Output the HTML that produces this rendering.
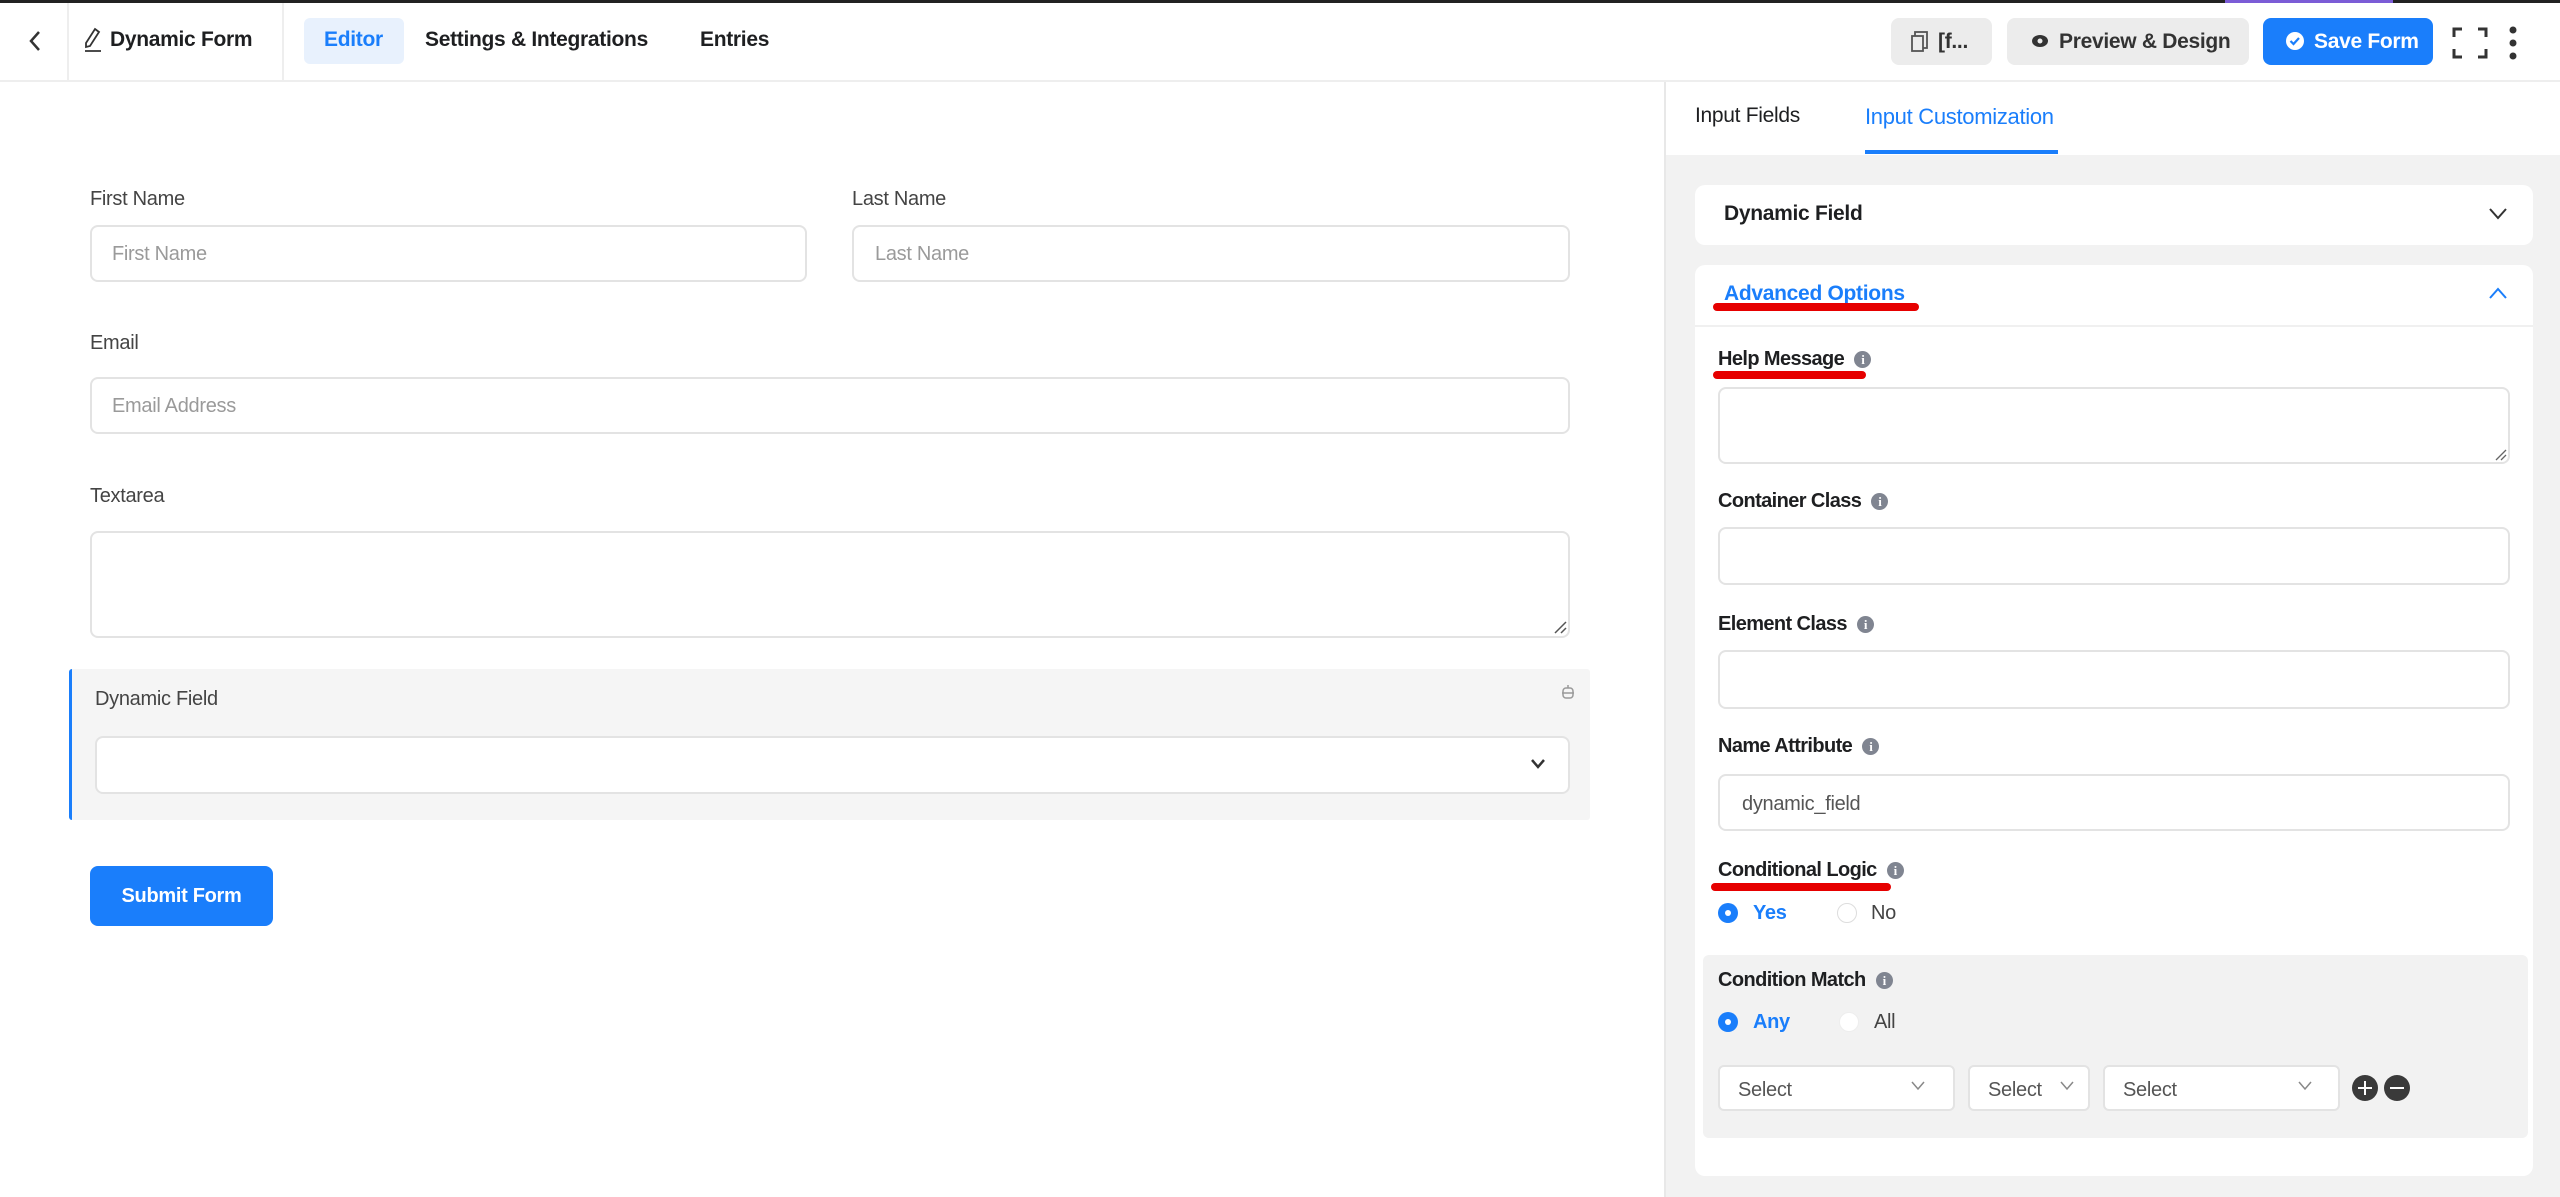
<!DOCTYPE html>
<html><head><meta charset="utf-8"><style>
*{box-sizing:border-box;margin:0;padding:0}
body{width:2560px;height:1197px;overflow:hidden;background:#fff;font-family:"Liberation Sans",sans-serif;color:#1e1f21;position:relative;letter-spacing:-0.3px}
.a{position:absolute}
.top{left:0;top:0;width:2560px;height:3px;background:#222}
.hdr{left:0;top:3px;width:2560px;height:79px;border-bottom:2px solid #eee;background:#fff}
.t{font-size:21px;white-space:nowrap}
.lbl{font-size:20px;color:#444}
.inp{border:2px solid #e3e3e3;border-radius:8px;background:#fff}
.ph{font-size:20px;color:#9a9a9a}
.rl{font-size:20px;color:#1e1f21;font-weight:bold;letter-spacing:-0.6px}
.info{display:inline-block;width:17px;height:17px;border-radius:50%;background:#808591;color:#fff;font-size:13px;text-align:center;line-height:17px;font-weight:bold;vertical-align:middle;margin-left:10px;font-family:"Liberation Serif",serif}
.red{background:#e60000;height:8px;border-radius:4px}
.sel{border:2px solid #e3e3e3;border-radius:6px;background:#fff;font-size:20px;color:#555;padding:12px 18px}
</style></head><body>
<div class="a top"></div>
<div class="a" style="left:2225px;top:0;width:168px;height:3px;background:#7b5cd6"></div>
<div class="a hdr"></div>
<div class="a" style="left:67px;top:3px;width:2px;height:79px;background:#eee"></div>
<div class="a" style="left:282px;top:3px;width:2px;height:79px;background:#eee"></div>
<svg class="a" style="left:28px;top:30px" width="14" height="22"><path d="M11 2 L3 11 L11 20" stroke="#333" stroke-width="2.5" fill="none"/></svg>
<svg class="a" style="left:83px;top:27px" width="20" height="26"><path d="M12 2 L16 5 L7 19 L3 20 L3 16 Z M2 24 L18 24" stroke="#333" stroke-width="1.8" fill="none"/></svg>
<div class="a t" style="left:110px;top:28px;font-weight:bold">Dynamic Form</div>
<div class="a" style="left:304px;top:18px;width:100px;height:46px;background:#e8f1fd;border-radius:6px"></div>
<div class="a t" style="left:324px;top:28px;color:#1a7efb;font-weight:bold">Editor</div>
<div class="a t" style="left:425px;top:28px;font-weight:bold">Settings &amp; Integrations</div>
<div class="a t" style="left:700px;top:28px;font-weight:bold">Entries</div>
<div class="a" style="left:1891px;top:18px;width:101px;height:47px;background:#ececec;border-radius:8px"></div>
<svg class="a" style="left:1911px;top:31px" width="18" height="22"><rect x="4" y="1" width="12" height="16" fill="none" stroke="#555" stroke-width="1.8"/><rect x="1" y="5" width="11" height="15" fill="#ececec" stroke="#555" stroke-width="1.8"/></svg>
<div class="a t" style="left:1938px;top:30px;font-weight:bold;color:#333">[f...</div>
<div class="a" style="left:2007px;top:18px;width:242px;height:47px;background:#ececec;border-radius:8px"></div>
<svg class="a" style="left:2031px;top:33px" width="18" height="16"><ellipse cx="9" cy="8" rx="8" ry="6" fill="#333"/><circle cx="9" cy="8" r="2.5" fill="#ececec"/></svg>
<div class="a t" style="left:2059px;top:30px;font-weight:bold;color:#333">Preview &amp; Design</div>
<div class="a" style="left:2263px;top:18px;width:170px;height:47px;background:#1a7efb;border-radius:8px"></div>
<svg class="a" style="left:2285px;top:31px" width="20" height="20"><circle cx="10" cy="10" r="9" fill="#fff"/><path d="M5.5 10 L8.5 13 L14 7" stroke="#1a7efb" stroke-width="2.2" fill="none"/></svg>
<div class="a t" style="left:2314px;top:30px;font-weight:bold;color:#fff">Save Form</div>
<svg class="a" style="left:2452px;top:27px" width="36" height="32"><path d="M2 10V2H10M26 2H34V10M34 22V30H26M10 30H2V22" stroke="#333" stroke-width="3" fill="none"/></svg>
<svg class="a" style="left:2508px;top:26px" width="10" height="34"><circle cx="5" cy="4" r="3.5" fill="#333"/><circle cx="5" cy="17" r="3.5" fill="#333"/><circle cx="5" cy="30" r="3.5" fill="#333"/></svg>

<div class="a lbl" style="left:90px;top:188px">First Name</div>
<div class="a inp" style="left:90px;top:225px;width:717px;height:57px"></div>
<div class="a ph" style="left:112px;top:243px">First Name</div>
<div class="a lbl" style="left:852px;top:188px">Last Name</div>
<div class="a inp" style="left:852px;top:225px;width:718px;height:57px"></div>
<div class="a ph" style="left:875px;top:243px">Last Name</div>
<div class="a lbl" style="left:90px;top:332px">Email</div>
<div class="a inp" style="left:90px;top:377px;width:1480px;height:57px"></div>
<div class="a ph" style="left:112px;top:395px">Email Address</div>
<div class="a lbl" style="left:90px;top:485px">Textarea</div>
<div class="a inp" style="left:90px;top:531px;width:1480px;height:107px"></div>
<svg class="a" style="left:1553px;top:620px" width="14" height="14"><path d="M2 13L13 2M8 13L13 8" stroke="#555" stroke-width="1.5"/></svg>
<div class="a" style="left:69px;top:669px;width:1521px;height:151px;background:#f5f5f5;border-left:3px solid #1a7efb;border-radius:3px"></div>
<div class="a lbl" style="left:95px;top:688px">Dynamic Field</div>
<svg class="a" style="left:1561px;top:684px" width="14" height="18"><rect x="2" y="4" width="10" height="10" rx="3" fill="none" stroke="#999" stroke-width="1.5"/><path d="M1 9H13M7 1V4" stroke="#999" stroke-width="1.5"/></svg>
<div class="a inp" style="left:95px;top:736px;width:1475px;height:58px"></div>
<svg class="a" style="left:1530px;top:758px" width="16" height="12"><path d="M2 2L8 9L14 2" stroke="#333" stroke-width="2.5" fill="none"/></svg>
<div class="a" style="left:90px;top:866px;width:183px;height:60px;background:#1a7efb;border-radius:8px"></div>
<div class="a" style="left:90px;top:885px;width:183px;text-align:center;color:#fff;font-weight:bold;font-size:20px">Submit Form</div>

<div class="a" style="left:1664px;top:82px;width:896px;height:1115px;background:#f2f2f2;border-left:2px solid #e8e8e8"></div>
<div class="a" style="left:1666px;top:82px;width:894px;height:73px;background:#fff"></div>
<div class="a t" style="left:1695px;top:104px;font-size:21px">Input Fields</div>
<div class="a t" style="left:1865px;top:104px;font-size:22px;color:#1a7efb">Input Customization</div>
<div class="a" style="left:1865px;top:150px;width:193px;height:4px;background:#1a7efb"></div>

<div class="a" style="left:1695px;top:185px;width:838px;height:60px;background:#fff;border-radius:10px"></div>
<div class="a" style="left:1724px;top:202px;font-size:21px;font-weight:600">Dynamic Field</div>
<svg class="a" style="left:2488px;top:207px" width="20" height="14"><path d="M2 2L10 11L18 2" stroke="#333" stroke-width="2" fill="none"/></svg>

<div class="a" style="left:1695px;top:265px;width:838px;height:911px;background:#fff;border-radius:10px"></div>
<div class="a" style="left:1695px;top:325px;width:838px;height:2px;background:#f0f0f0"></div>
<div class="a t" style="left:1724px;top:282px;font-size:21px;color:#1a7efb;font-weight:bold">Advanced Options</div>
<div class="a red" style="left:1713px;top:303px;width:206px"></div>
<svg class="a" style="left:2488px;top:286px" width="20" height="14"><path d="M2 12L10 3L18 12" stroke="#1a7efb" stroke-width="2" fill="none"/></svg>

<div class="a rl" style="left:1718px;top:348px">Help Message<span class="info">i</span></div>
<div class="a red" style="left:1713px;top:371px;width:153px"></div>
<div class="a inp" style="left:1718px;top:387px;width:792px;height:77px"></div>
<svg class="a" style="left:2495px;top:449px" width="12" height="12"><path d="M1 11L11 1M6 11L11 6" stroke="#666" stroke-width="1.3"/></svg>
<div class="a rl" style="left:1718px;top:490px">Container Class<span class="info">i</span></div>
<div class="a inp" style="left:1718px;top:527px;width:792px;height:58px"></div>
<div class="a rl" style="left:1718px;top:613px">Element Class<span class="info">i</span></div>
<div class="a inp" style="left:1718px;top:650px;width:792px;height:59px"></div>
<div class="a rl" style="left:1718px;top:735px">Name Attribute<span class="info">i</span></div>
<div class="a inp" style="left:1718px;top:774px;width:792px;height:57px"></div>
<div class="a" style="left:1742px;top:793px;font-size:20px;color:#555">dynamic_field</div>
<div class="a rl" style="left:1718px;top:859px">Conditional Logic<span class="info">i</span></div>
<div class="a red" style="left:1711px;top:883px;width:180px"></div>
<div class="a" style="left:1718px;top:903px;width:20px;height:20px;border-radius:50%;background:#1a7efb"><div style="margin:7px;width:6px;height:6px;border-radius:50%;background:#fff"></div></div>
<div class="a" style="left:1753px;top:902px;font-size:20px;color:#1a7efb;font-weight:bold">Yes</div>
<div class="a" style="left:1837px;top:903px;width:20px;height:20px;border-radius:50%;border:1.5px solid #ddd"></div>
<div class="a" style="left:1871px;top:902px;font-size:20px;color:#444">No</div>

<div class="a" style="left:1703px;top:955px;width:825px;height:183px;background:#f2f2f2;border-radius:6px"></div>
<div class="a rl" style="left:1718px;top:969px">Condition Match<span class="info">i</span></div>
<div class="a" style="left:1718px;top:1012px;width:20px;height:20px;border-radius:50%;background:#1a7efb"><div style="margin:7px;width:6px;height:6px;border-radius:50%;background:#fff"></div></div>
<div class="a" style="left:1753px;top:1011px;font-size:20px;color:#1a7efb;font-weight:bold">Any</div>
<div class="a" style="left:1839px;top:1012px;width:20px;height:20px;border-radius:50%;background:#fff;border:1.5px solid #eee"></div>
<div class="a" style="left:1874px;top:1011px;font-size:20px;color:#444">All</div>
<div class="a sel" style="left:1718px;top:1065px;width:237px;height:46px">Select</div>
<svg class="a" style="left:1911px;top:1081px" width="14" height="10"><path d="M1 1L7 8L13 1" stroke="#888" stroke-width="1.5" fill="none"/></svg>
<div class="a sel" style="left:1968px;top:1065px;width:122px;height:46px">Select</div>
<svg class="a" style="left:2060px;top:1081px" width="14" height="10"><path d="M1 1L7 8L13 1" stroke="#888" stroke-width="1.5" fill="none"/></svg>
<div class="a sel" style="left:2103px;top:1065px;width:237px;height:46px">Select</div>
<svg class="a" style="left:2298px;top:1081px" width="14" height="10"><path d="M1 1L7 8L13 1" stroke="#888" stroke-width="1.5" fill="none"/></svg>
<svg class="a" style="left:2351px;top:1074px" width="60" height="28"><circle cx="14" cy="14" r="13" fill="#3a3a3a"/><path d="M14 7V21M7 14H21" stroke="#fff" stroke-width="2"/><circle cx="46" cy="14" r="13" fill="#3a3a3a"/><path d="M39 14H53" stroke="#fff" stroke-width="2"/></svg>
</body></html>
